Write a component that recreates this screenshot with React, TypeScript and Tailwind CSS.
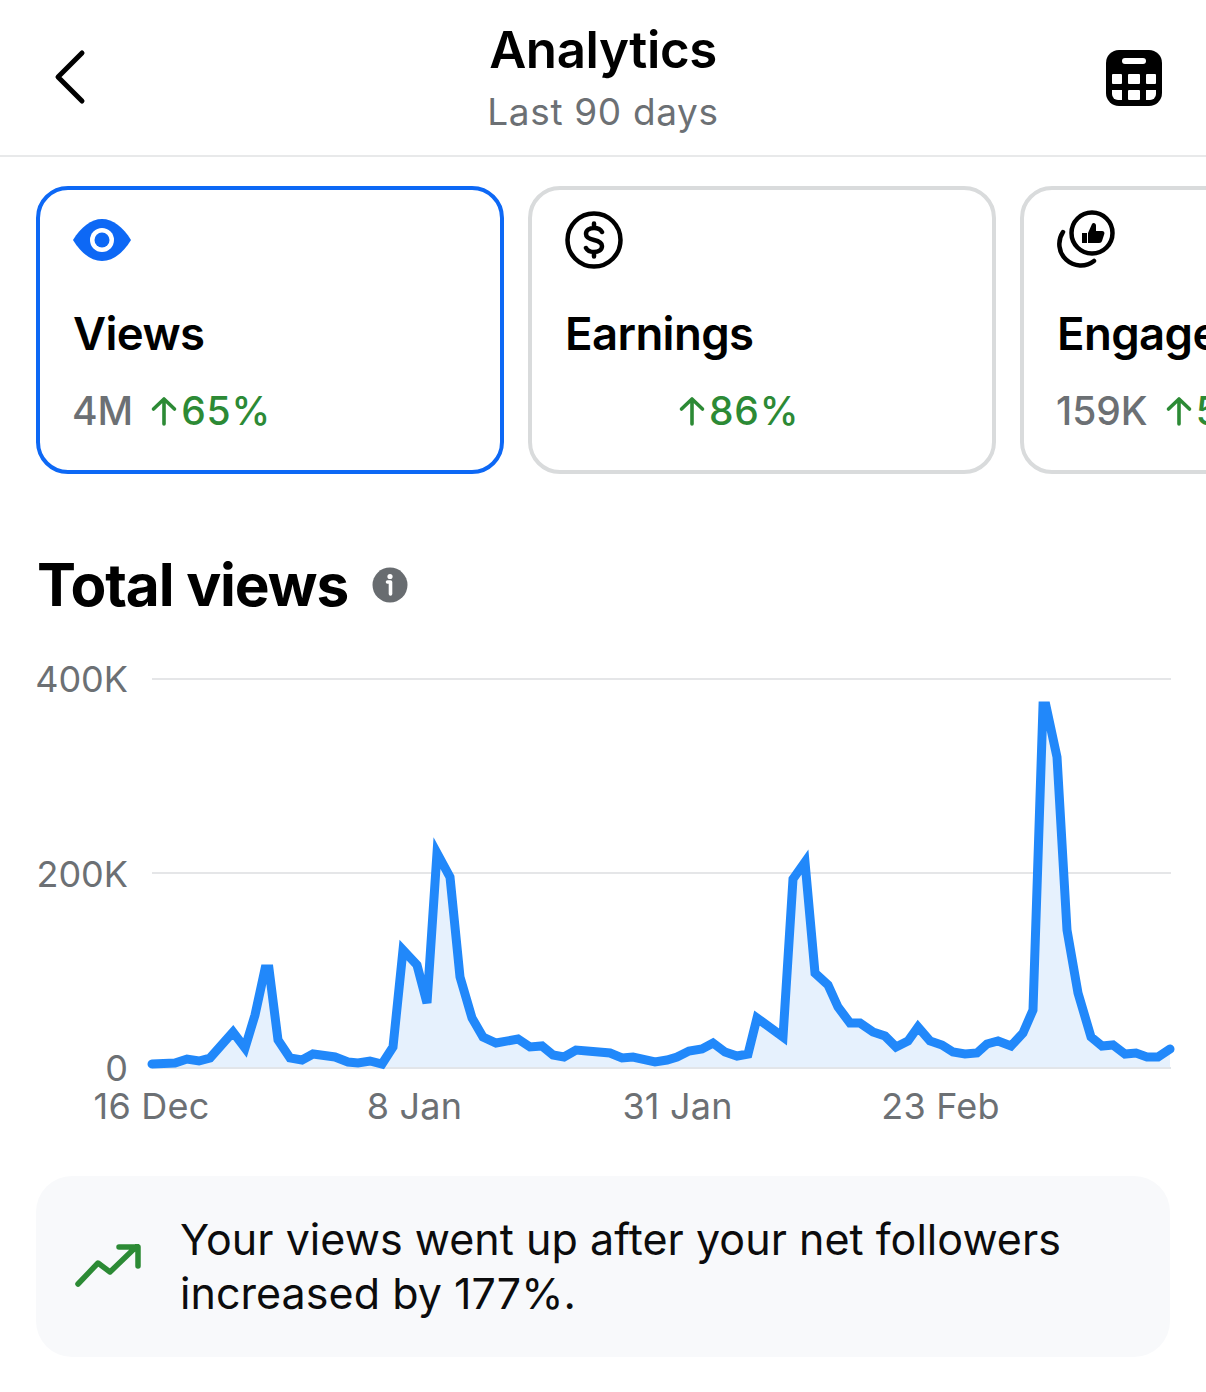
const font = { fontFamily: "Inter, 'Liberation Sans', sans-serif" }

const linePoints =
  "152,1064 175,1063 187,1059 199,1061 210,1058 233,1032 245,1048 255,1015 265,969 269,969 278,1040 290,1058 302,1060 313,1054 335,1057 348,1062 358,1063 370,1061 382,1064 393,1047 403,950 417,965 427,1003 437,853 450,877 460,977 472,1018 483,1037 496,1043 518,1039 530,1047 542,1046 553,1055 564,1057 576,1050 587,1051 610,1053 622,1058 633,1057 655,1062 667,1060 677,1057 689,1051 702,1049 713,1043 725,1052 737,1056 748,1054 757,1018 783,1037 793,879 805,862 815,973 828,985 838,1007 850,1023 860,1023 873,1032 885,1036 896,1047 908,1041 918,1027 930,1041 942,1045 953,1052 965,1054 977,1053 987,1044 998,1041 1011,1046 1023,1033 1033,1010 1043,706 1046,706 1057,757 1067,930 1078,993 1091,1037 1102,1046 1113,1045 1125,1054 1136,1053 1147,1057 1158,1057 1170,1049"

function UpArrow() {
  return (
    <svg width="28" height="30" viewBox="0 0 28 30" fill="none" stroke="#2c8a35" strokeWidth="3.6" strokeLinecap="round" strokeLinejoin="round" className="shrink-0">
      <path d="M14 3v25M3.5 13 14 3l10.500 10" />
    </svg>
  )
}

function MetricCard({ active, icon, title, value, change, offset }: { active?: boolean; icon: React.ReactNode; title: string; value?: string; change: string; offset?: string }) {
  return (
    <div className={`h-[288px] w-[468px] shrink-0 rounded-[32px] border-[4px] pl-[33px] pt-[21px] ${active ? "border-[#0d68f5]" : "border-[#d9dbdc]"}`}>
      <div className="flex h-[64px] items-start">{icon}</div>
      <div className="mt-[30px] text-[45.500px] leading-[58px] font-semibold tracking-[-0.6px] whitespace-nowrap text-black">{title}</div>
      <div className="mt-[23px] flex items-center whitespace-nowrap text-[39px] leading-[50px] font-medium">
        {value && <span className="-ml-[1px] mr-[17px] text-[#6c7074]">{value}</span>}
        <span className={offset}><UpArrow /></span>
        <span className="ml-[3px] tracking-[0.8px] text-[#2c8a35]">{change}</span>
      </div>
    </div>
  )
}

export default function App() {
  return (
    <div className="h-[1392px] w-[1206px] overflow-hidden bg-white" style={font}>
      {/* Header */}
      <div className="flex h-[157px] items-start justify-between border-b-2 border-[#e8e9ea]">
        <div className="w-[110px] pl-[50px] pt-[48px]">
          <svg width="40" height="62" viewBox="0 0 40 62" fill="none" stroke="#000" strokeWidth="5" strokeLinecap="round" strokeLinejoin="round">
            <path d="M32 5 8 29l24 24" />
          </svg>
        </div>
        <div className="flex flex-col items-center pt-[20px]">
          <div className="text-[51px] leading-[60px] font-semibold tracking-[-0.4px] text-black">Analytics</div>
          <div className="mt-[2px] text-[37px] leading-[60px] text-[#6c7074] tracking-[0.65px]">Last 90 days</div>
        </div>
        <div className="flex w-[110px] justify-end pr-[44px] pt-[50px]">
          <svg width="56" height="56" viewBox="0 0 56 56" className="shrink-0">
            <rect width="56" height="56" rx="13" fill="#000" />
            <rect x="16" y="8" width="24" height="6" rx="3" fill="#fff" />
            <g fill="#fff">
              <rect x="6" y="24" width="10" height="10" rx="1" />
              <rect x="22" y="24" width="12" height="10" rx="1" />
              <rect x="40" y="24" width="10" height="10" rx="1" />
              <path d="M6 40h10v10h-4a6 6 0 0 1-6-6z" />
              <rect x="22" y="40" width="12" height="10" rx="1" />
              <path d="M40 40h10v4a6 6 0 0 1-6 6h-4z" />
            </g>
          </svg>
        </div>
      </div>

      {/* Metric cards */}
      <div className="mt-[29px] flex gap-[24px] overflow-hidden pl-[36px]">
        <MetricCard
          active
          title="Views"
          value="4M"
          change="65%"
          icon={
            <svg width="58" height="42" viewBox="0 0 58 42" className="mt-[8px]">
              <path d="M0 21C8 8 18 0 29 0s21 8 29 21c-8 13-18 21-29 21S8 34 0 21z" fill="#0d68f5" />
              <circle cx="29" cy="21" r="12" fill="#fff" />
              <circle cx="29" cy="21" r="7.500" fill="#0d68f5" />
            </svg>
          }
        />
        <MetricCard
          title="Earnings"
          change="86%"
          offset="ml-[113px]"
          icon={
            <svg width="58" height="58" viewBox="0 0 58 58" fill="none" stroke="#000" strokeWidth="4.500" strokeLinecap="round">
              <circle cx="29" cy="29" r="26.500" />
              <path d="M37 21c-1.500-2.800-4.500-4-8-4-4.500 0-8 2.300-8 6 0 3.800 3.500 5 8 6s8 2.300 8 6c0 3.700-3.500 6-8 6-3.500 0-6.500-1.200-8-4M29 12.500V17M29 41v4.500" />
            </svg>
          }
        />
        <MetricCard
          title="Engagement"
          value="159K"
          change="51%"
          icon={
            <svg width="60" height="62" viewBox="0 0 60 62" fill="none" className="-mt-[3px]">
              <circle cx="35" cy="25" r="20.500" stroke="#000" strokeWidth="4.500" />
              <path d="M6 24A21.500 21.500 0 0 0 37 53" stroke="#000" strokeWidth="4.500" strokeLinecap="round" />
              <path d="M25 25h5v10h-5zM31 25l4-9c.8-1.800 4-1.500 4 1.500V23h6c2 0 2.800 1.500 2.300 3l-2.300 7c-.4 1.300-1.300 2-2.800 2H31z" fill="#000" />
            </svg>
          }
        />
      </div>

      {/* Total views heading */}
      <div className="mt-[76px] flex items-center pl-[37px]">
        <h1 className="text-[58.500px] leading-[70px] font-bold tracking-[-1.1px] text-black">Total views</h1>
        <svg width="36" height="36" viewBox="0 0 36 36" className="ml-[24px]">
          <circle cx="18" cy="18" r="17.500" fill="#686c70" />
          <circle cx="18" cy="9.500" r="2.600" fill="#fff" />
          <path d="M15.500 15h3v12" fill="none" stroke="#fff" strokeWidth="3.600" strokeLinejoin="round" strokeLinecap="round" />
        </svg>
      </div>

      {/* Chart */}
      <div className="mt-[40px] flex h-[428px] items-start">
        <div className="flex w-[128px] flex-col items-end pt-[2px] text-[36px] leading-[34px] text-[#6c7074]">
          <div>400K</div>
          <div className="mt-[161px]">200K</div>
          <div className="mt-[160px]">0</div>
        </div>
        <svg width="1054" height="428" viewBox="128 660 1054 428" className="shrink-0">
          <line x1="152" y1="679" x2="1171" y2="679" stroke="#dcdee0" strokeWidth="1.500" />
          <line x1="152" y1="873" x2="1171" y2="873" stroke="#dcdee0" strokeWidth="1.500" />
          <polygon points={`152,1068 ${linePoints} 1170,1068`} fill="#e6f1fd" />
          <line x1="152" y1="1068" x2="1171" y2="1068" stroke="#e2e5e9" strokeWidth="2" />
          <polyline points={linePoints} fill="none" stroke="#2188fa" strokeWidth="9" strokeLinejoin="miter" strokeMiterlimit="6" strokeLinecap="round" />
        </svg>
      </div>
      <div className="flex pl-[20px] text-[36px] leading-[36px] tracking-[0.2px] text-[#6c7074]">
        <div className="w-[263px] text-center">16 Dec</div>
        <div className="w-[263px] text-center">8 Jan</div>
        <div className="w-[263px] text-center">31 Jan</div>
        <div className="w-[263px] text-center">23 Feb</div>
      </div>

      {/* Insight */}
      <div className="mt-[52px] ml-[36px] flex h-[181px] w-[1134px] items-center rounded-[36px] bg-[#f8f9fb] pb-[2px] pl-[39px]">
        <svg width="68" height="44" viewBox="0 0 68 44" fill="none" stroke="#2c8a35" strokeWidth="5.500" strokeLinecap="round" strokeLinejoin="round" className="shrink-0">
          <path d="M3 40 23 19l12 9 27-26M44 3h19v19" />
        </svg>
        <p className="ml-[37px] text-[43px] leading-[54px] tracking-[0.05px] text-[#0c0c0d]">
          Your views went up after your net followers
          <br />
          increased by 177%.
        </p>
      </div>
    </div>
  )
}
